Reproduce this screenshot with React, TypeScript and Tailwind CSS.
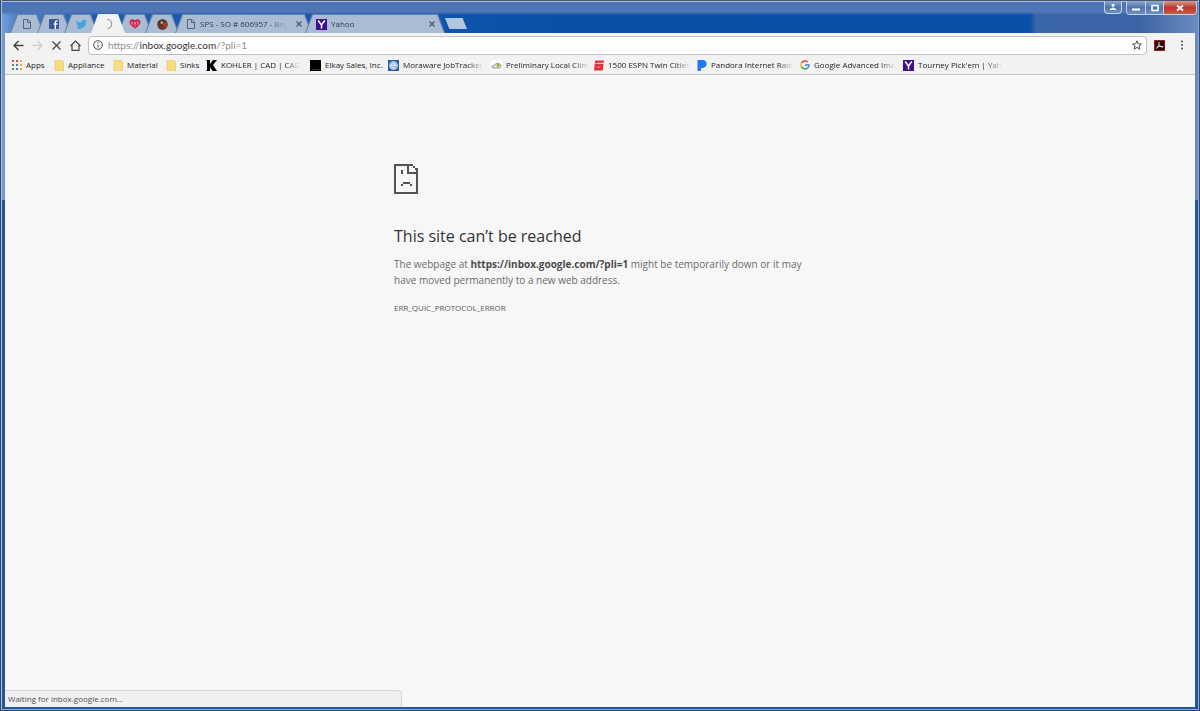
import React from "react";

const tabShape =
  "[clip-path:polygon(7px_0,calc(100%-7px)_0,100%_100%,0_100%)]";

function PageIcon() {
  return (
    <svg viewBox="0 0 10 12" className="h-3 w-2.5" fill="none" stroke="#5c6673" strokeWidth="1">
      <path d="M1.5 1.5h4.5l2.5 2.5v6.500h-7z" />
      <path d="M5.500 1.500v3h3" />
    </svg>
  );
}

function YahooIcon() {
  return (
    <svg viewBox="0 0 11 11" className="size-[11px]">
      <path fill="#40108f" d="M0 0h11v11H0z" />
      <path d="M2.200 1.500L5.500 6V9.500M8.800 1.500L5.500 6" fill="none" stroke="#fff" strokeWidth="1.500" />
    </svg>
  );
}

function FacebookIcon() {
  return (
    <svg viewBox="0 0 10 10" className="size-2.5">
      <rect width="10" height="10" rx="1" fill="#3b5998" />
      <path d="M8.700 1.800H7.800C6.700 1.800 6.300 2.400 6.300 3.300V10M4.700 5h3.800" fill="none" stroke="#fff" strokeWidth="1.300" />
    </svg>
  );
}

function TwitterIcon() {
  return (
    <svg viewBox="0 0 24 24" className="size-[11px]" fill="#3fa3e4">
      <path d="M23.950 4.600a10 10 0 0 1-2.800.8 4.900 4.900 0 0 0 2.200-2.700 9.900 9.900 0 0 1-3.100 1.200 4.900 4.900 0 0 0-8.400 4.500A14 14 0 0 1 1.700 3.100a4.900 4.900 0 0 0 1.500 6.600 4.900 4.900 0 0 1-2.200-.6 4.900 4.900 0 0 0 3.900 4.900 5 5 0 0 1-2.200.1 4.900 4.900 0 0 0 4.600 3.400A9.900 9.900 0 0 1 0 19.500a14 14 0 0 0 21.500-12.400 10 10 0 0 0 2.450-2.500z" />
    </svg>
  );
}

function HeartIcon() {
  return (
    <svg viewBox="0 0 12 10" className="h-2.5 w-3">
      <path d="M6 1.300C4.500-.3.400-.1.500 3.400.600 5.500 3 7.200 6 9.700 9 7.200 11.400 5.500 11.500 3.400 11.600-.1 7.500-.3 6 1.300z" fill="#c9284e" />
      <path d="M6 4.500v4M4.200 2.800a2 2 0 0 0 0 3M7.800 2.800a2 2 0 0 1 0 3M2.700 2.300v3.400M9.300 2.300v3.400" stroke="#e6a4b8" strokeWidth=".6" fill="none" />
      <circle cx="6" cy="4" r=".7" fill="#fff" />
    </svg>
  );
}

function BallIcon() {
  return (
    <svg viewBox="0 0 11 11" className="size-[11px]">
      <circle cx="5.500" cy="5.500" r="5.200" fill="#6e2a1c" />
      <path d="M.5 4a5.200 5.200 0 0 1 9-1.500L6 5.500z" fill="#47333f" />
      <path d="M5 5l4.800-2.200a5.200 5.200 0 0 1-2.300 7z" fill="#a13c20" />
      <path d="M1.500 8A5 5 0 0 0 6 10.500L4 6z" fill="#5b3a4a" />
      <circle cx="4.800" cy="3.600" r="1.500" fill="#d98a5a" />
    </svg>
  );
}

function Spinner() {
  return (
    <svg viewBox="0 0 12 12" className="size-3" fill="none" stroke="#8f959c" strokeWidth="1.100">
      <path d="M5 1.500a4.500 4.500 0 1 1 .5 9" />
    </svg>
  );
}

function CloseGlyph() {
  return (
    <svg viewBox="0 0 8 8" className="size-2" stroke="#4d5866" strokeWidth="1.200">
      <path d="M1.500 1.500l5 5M6.500 1.500l-5 5" />
    </svg>
  );
}

type TabProps = {
  label: string;
  icon: React.ReactNode;
  active?: boolean;
  wide?: string;
};

function Tab({ label, icon, active, wide }: TabProps) {
  return (
    <div className={`-mr-[7px] h-[19px] pt-px ${tabShape} ${wide ?? "w-[34px]"} ${active ? "z-10 bg-[#e5ecf6]" : "bg-[#6883a6]"}`}>
      <div className={`mx-px flex h-full items-center ${tabShape} ${active ? "bg-[#f2f2f3]" : "bg-[#a9bcd4]"} ${wide ? "pr-2 pl-2.5" : "justify-center"}`}>
        <button type="button" aria-label={label} className="flex min-w-0 flex-1 items-center justify-center gap-1 text-left text-[8px] leading-3 text-[#2f3a48]">
          <span className="shrink-0">{icon}</span>
          {wide && (
            <span className="flex-1 whitespace-nowrap [mask-image:linear-gradient(to_right,#000_74%,transparent_96%)]">{label}</span>
          )}
        </button>
        {wide && (
          <button type="button" aria-label={`Close ${label}`} className="ml-1">
            <CloseGlyph />
          </button>
        )}
      </div>
    </div>
  );
}

function FolderIcon() {
  return (
    <svg viewBox="0 0 10 11" className="h-[11px] w-2.5">
      <path d="M1 .5h7.500V2H9.500v8.500H1z" fill="#f8dc82" stroke="#e9c765" strokeWidth=".7" />
    </svg>
  );
}

function AppsIcon() {
  const colors = ["#d9473c", "#d9473c", "#e8b42a", "#3f9d58", "#4779d8", "#e8b42a", "#3f9d58", "#4779d8", "#e8a42a"];
  return (
    <svg viewBox="0 0 10 10" className="size-2.5">
      {colors.map((c, i) => (
        <rect key={i} x={(i % 3) * 4} y={Math.floor(i / 3) * 4} width="2" height="2" fill={c} />
      ))}
    </svg>
  );
}

function KohlerIcon() {
  return (
    <svg viewBox="0 0 11 11" className="size-[11px]">
      <path d="M0 0h4v4L7 0h4L7 5l4 6H6.500L4 7v4H0l1-1V1z" fill="#000" />
    </svg>
  );
}

function ElkayIcon() {
  return (
    <svg viewBox="0 0 11 11" className="size-[11px]">
      <path d="M0 0h11v11H0z" />
      <path d="M1 9.500h9" stroke="#444" strokeWidth=".6" />
    </svg>
  );
}

function MorawareIcon() {
  return (
    <svg viewBox="0 0 11 11" className="size-[11px]">
      <path d="M0 0h11v11H0z" fill="#2a5e9e" />
      <circle cx="5.500" cy="5.500" r="3.700" fill="#7fa6d2" stroke="#e2ecf7" strokeWidth="1.100" />
      <path d="M7.500 5.500h-3M7.500 5.500A2 2 0 1 0 6.500 7.300" stroke="#fff" strokeWidth="1" fill="none" />
    </svg>
  );
}

function CloudIcon() {
  return (
    <svg viewBox="0 0 11 11" className="size-[11px]">
      <path d="M0 0h11v11H0z" fill="#fff" />
      <path d="M1 7.500C.5 6 2 5.200 3.500 5.400 4 3 8 2.500 9.300 4.500 10.500 6.500 9.500 8 8 8H2z" fill="#e9e6d8" stroke="#77766c" strokeWidth=".8" />
      <circle cx="7" cy="5.200" r="1.500" fill="#a8a23d" />
    </svg>
  );
}

function EspnIcon() {
  return (
    <svg viewBox="0 0 10 11" className="h-[11px] w-2.5" fill="#e0323a">
      <path d="M1.200.5H10L9.700 2.800H3.700L3.600 4H9.500L8.800 10.500H0L.7 4.200z" />
      <path d="M.7 3.500h9M3.200 7.200h3" stroke="#f4b7ba" strokeWidth=".8" />
    </svg>
  );
}

function PandoraIcon() {
  return (
    <svg viewBox="0 0 10 11" className="h-[11px] w-2.5" fill="#1f7af0">
      <path d="M.5 0H5.500C8 0 9.700 1.500 9.700 3.800 9.700 6.500 7.800 8 5 8H4v2q0 1-1 1H.5z" />
    </svg>
  );
}

function GoogleIcon() {
  return (
    <svg viewBox="0 0 10 10" className="size-2.5" fill="none" strokeWidth="1.500">
      <path d="M7.800 2A4 4 0 0 0 1.500 3.200" stroke="#e04a3f" />
      <path d="M1.500 3.200a4 4 0 0 0 0 3.600" stroke="#efb923" />
      <path d="M1.500 6.800a4 4 0 0 0 6 1.300" stroke="#3ba357" />
      <path d="M7.500 8.100A3.800 3.800 0 0 0 8.900 5H5" stroke="#4380e8" />
    </svg>
  );
}

const bookmarks = [
  { label: "Apps", icon: <AppsIcon />, width: "w-[42px]" },
  { label: "Appliance", icon: <FolderIcon />, width: "w-[59px]" },
  { label: "Material", icon: <FolderIcon />, width: "w-[53px]" },
  { label: "Sinks", icon: <FolderIcon />, width: "w-10" },
  { label: "KOHLER | CAD | CAD", icon: <KohlerIcon />, width: "w-[104px]", fade: true },
  { label: "Elkay Sales, Inc.", icon: <ElkayIcon />, width: "w-[78px]" },
  { label: "Moraware JobTracker", icon: <MorawareIcon />, width: "w-[103px]", fade: true },
  { label: "Preliminary Local Clim", icon: <CloudIcon />, width: "w-[103px]", fade: true },
  { label: "1500 ESPN Twin Cities", icon: <EspnIcon />, width: "w-[103px]", fade: true },
  { label: "Pandora Internet Radi", icon: <PandoraIcon />, width: "w-[103px]", fade: true },
  { label: "Google Advanced Ima", icon: <GoogleIcon />, width: "w-[103px]", fade: true },
  { label: "Tourney Pick'em | Yah", icon: <YahooIcon />, width: "w-[103px]", fade: true },
];

function WindowControls() {
  const base = "flex h-[13px] items-center justify-center border-[#c3d2ea] bg-linear-to-b from-[#8ea9d2] via-[#5374a9] to-[#6f90c4]";
  return (
    <div className="-mr-0.5 flex items-start gap-1">
      <button type="button" aria-label="Profile" className={`${base} w-[18px] rounded-b border border-t-0`}>
        <svg viewBox="0 0 8 8" className="size-2" fill="#fff">
          <circle cx="4" cy="2.300" r="1.500" />
          <path d="M1 5.500h2L4 4l1 1.500h2V7H1z" />
        </svg>
      </button>
      <div className="flex overflow-hidden rounded-b border border-t-0 border-[#c3d2ea]">
        <button type="button" aria-label="Minimize" className={`${base} w-[19px] border-r`}>
          <svg viewBox="0 0 8 8" className="size-2"><path d="M0 4.500h8v2H0z" fill="#fff" /></svg>
        </button>
        <button type="button" aria-label="Restore" className={`${base} w-[18px] border-r`}>
          <svg viewBox="0 0 8 8" className="size-2" fill="none" stroke="#fff" strokeWidth="1.600"><path d="M1 1.500h6v5H1z" /></svg>
        </button>
        <button type="button" aria-label="Close window" className="flex h-[13px] w-8 items-center justify-center bg-linear-to-b from-[#d99a90] via-[#b8382b] to-[#cd5a43]">
          <svg viewBox="0 0 8 8" className="size-2" stroke="#fff" strokeWidth="1.800"><path d="M1 1.500l6 5M7 1.500l-6 5" /></svg>
        </button>
      </div>
    </div>
  );
}

function TitleBar() {
  return (
    <header className="flex h-8 justify-between">
      <nav aria-label="Tabs" className="flex items-end pl-[5px]">
        <Tab label="New document" icon={<PageIcon />} />
        <Tab label="Facebook" icon={<FacebookIcon />} />
        <Tab label="Twitter" icon={<TwitterIcon />} />
        <Tab label="Inbox" icon={<Spinner />} active />
        <Tab label="iHeartRadio" icon={<HeartIcon />} />
        <Tab label="Basketball" icon={<BallIcon />} />
        <Tab label="SPS - SO # 606957 - Boy" icon={<PageIcon />} wide="ml-[3px] w-[137px]" />
        <Tab label="Yahoo" icon={<YahooIcon />} wide="w-[140px]" />
        <button type="button" aria-label="New tab" className="mb-1 ml-[7px] h-[11px] w-[22px] bg-[#b4c6dd] [clip-path:polygon(0_0,80%_0,100%_100%,20%_100%)]" />
      </nav>
      <WindowControls />
    </header>
  );
}

function Toolbar() {
  const stroke = { fill: "none", stroke: "#444", strokeWidth: 1.4 };
  return (
    <div className="flex h-[23px] items-center bg-[#f2f2f2] pt-px pr-2 pl-2">
      <div className="flex items-center gap-2">
        <button type="button" aria-label="Back"><svg viewBox="0 0 11 11" className="size-[11px]" {...stroke}><path d="M10.500 5.500H1M5.500 1L1 5.500 5.500 10" /></svg></button>
        <button type="button" aria-label="Forward" disabled><svg viewBox="0 0 11 11" className="size-[11px]" {...stroke} stroke="#cfcfcf"><path d="M.5 5.500H10M5.500 1L10 5.500 5.500 10" /></svg></button>
        <button type="button" aria-label="Stop"><svg viewBox="0 0 11 11" className="size-[11px]" {...stroke} strokeWidth={1.2}><path d="M1.500 1.500l8 8M9.500 1.500l-8 8" /></svg></button>
        <button type="button" aria-label="Home"><svg viewBox="0 0 11 11" className="size-[11px]" {...stroke} strokeWidth={1.2}><path d="M.5 6L5.500 1l5 5M2 5v5.300h7V5" /></svg></button>
      </div>
      <div className="ml-[7px] flex h-[19px] flex-1 items-center rounded-sm border border-[#c2c2c2] bg-white pr-1 pl-1">
        <svg viewBox="0 0 10 10" className="size-2.5 shrink-0" fill="none" stroke="#4a4a4a" strokeWidth="1">
          <circle cx="5" cy="5" r="4.300" />
          <path d="M5 4.500v3M5 2.400v1.200" />
        </svg>
        <div className="relative ml-[5px] flex-1 font-[Lato,sans-serif] text-[10px] leading-4">
          <input
            aria-label="Address"
            defaultValue="https://inbox.google.com/?pli=1"
            className="block w-full bg-transparent text-transparent caret-black outline-none"
          />
          <span aria-hidden="true" className="pointer-events-none absolute inset-0 text-[#8d8d8d]">
            https://<span className="text-[#333]">inbox.google.com</span>/?pli=1
          </span>
        </div>
        <button type="button" aria-label="Bookmark this page">
          <svg viewBox="0 0 10 10" className="size-2.5" fill="none" stroke="#4a4a4a" strokeWidth="1"><path d="M5 .8l1.200 3 3.200.2-2.500 2 .9 3.200L5 7.400 2.200 9.200l.9-3.200L.6 4l3.200-.2z" /></svg>
        </button>
      </div>
      <button type="button" aria-label="Acrobat" className="ml-[7px]">
        <svg viewBox="0 0 11 11" className="size-[11px]">
          <path d="M.5.5h10v10H.5z" fill="#2a0706" stroke="#8c1d16" />
          <path d="M2 8.500C4.500 7 5.500 4.500 5 2M5.200 4.500C6 6.500 7.500 7.200 9.200 6.700M3 7.200C5 6.300 7 6.200 9 7" fill="none" stroke="#f2eded" strokeWidth=".9" />
        </svg>
      </button>
      <button type="button" aria-label="Menu" className="ml-3">
        <svg viewBox="0 0 10 10" className="size-2.5" fill="#4a4a4a"><circle cx="5" cy="1.500" r="1" /><circle cx="5" cy="5" r="1" /><circle cx="5" cy="8.500" r="1" /></svg>
      </button>
    </div>
  );
}

function BookmarksBar() {
  return (
    <nav aria-label="Bookmarks" className="flex h-[19px] items-center border-b border-[#c4c4c4] bg-[#f2f2f2] pl-[7px]">
      {bookmarks.map((b) => (
        <a key={b.label} href="#" className={`flex shrink-0 items-center gap-1 ${b.width} text-[8px] leading-3 text-[#222]`}>
          <span className="shrink-0">{b.icon}</span>
          <span className={b.fade ? "whitespace-nowrap [mask-image:linear-gradient(to_right,#000_82%,transparent)]" : "whitespace-nowrap"}>
            {b.label}
          </span>
        </a>
      ))}
    </nav>
  );
}

function SadPage() {
  return (
    <svg viewBox="0 0 24 30" className="h-[30px] w-6" fill="#535353">
      <path d="M0 0h19v2H2v26h20V10h2v20H0z" />
      <path d="M13 2h2v6h7v2h-9zM19 2h2v2h-2zM21 4h3v6h-2V6h-1z" />
      <path d="M7 6h2v4H7zM9 18h7v2H9zM7 20h2v2H7zM16 20h2v2h-2z" />
    </svg>
  );
}

export default function App() {
  return (
    <div className="flex min-h-screen flex-col bg-[#265598] bg-[linear-gradient(to_bottom,#4a5468_0,#4a5468_1px,#a9c0e6_1px,#a9c0e6_2px,transparent_2px),linear-gradient(to_bottom,#4971b8_0,#4f76b6_12px,transparent_15px),linear-gradient(to_right,#7ba2d8_0,#4e82c8_16px,#1c5db2_90px,#0f56ae_400px,#0850a8_550px,#0850a8_1030px,#3b66aa_1036px,#3d64a5_1140px,#6c8dc0_100%)] bg-[length:100%_100%,100%_200px,100%_200px] bg-no-repeat px-[5px] pt-px pb-1 font-['Open_Sans',sans-serif] shadow-[inset_1px_0_#34475f,inset_-1px_-1px_#34475f,inset_2px_0_#a5c2e8,inset_-2px_-2px_#79aeea]">
      <TitleBar />
      <div className="flex flex-1 flex-col bg-[#f7f7f7]">
        <Toolbar />
        <BookmarksBar />
        <main className="mx-auto w-full max-w-[412px] flex-1 pt-[89px]">
          <SadPage />
          <h1 className="mt-[30px] text-[16px] leading-6 text-[#333]">This site can’t be reached</h1>
          <p className="mt-2 text-[10px] leading-4 text-[#6a6a6a]">
            The webpage at <strong className="text-[#4a4a4a]">https://inbox.google.com/?pli=1</strong> might be temporarily down or it may have moved permanently to a new web address.
          </p>
          <p className="mt-3.5 text-[8px] leading-3 text-[#5a5a5a]">ERR_QUIC_PROTOCOL_ERROR</p>
        </main>
        <footer className="h-[17px] w-1/3 rounded-tr-sm border-t border-r border-[#d5d5d5] bg-[#f0f0f0] pl-[3px] text-[8px] leading-[15px] text-[#505050]">
          Waiting for inbox.google.com...
        </footer>
      </div>
    </div>
  );
}
